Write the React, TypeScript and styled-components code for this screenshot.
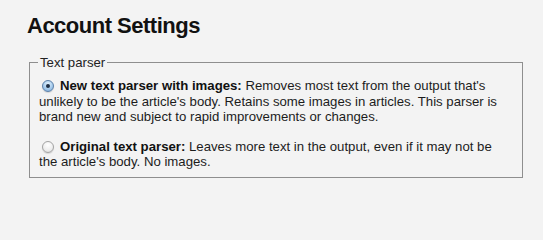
import styled, { createGlobalStyle } from 'styled-components';

const GlobalStyle = createGlobalStyle`
  html, body {
    margin: 0;
    padding: 0;
    background: #f3f3f3;
  }
  body {
    font-family: "Liberation Sans", Arial, sans-serif;
    color: #1a1a1a;
  }
`;

const Page = styled.div`
  padding: 13px 20px 0 27px;
  width: 543px;
  height: 204px;
  box-sizing: border-box;
`;

const Title = styled.h1`
  margin: 0 0 16px 0;
  font-size: 22px;
  line-height: 26px;
  letter-spacing: -0.5px;
  font-weight: bold;
  color: #111;
`;

const Fieldset = styled.fieldset`
  margin: 0 0 0 2px;
  padding: 8px 12px 7px 9px;
  border: 1px solid #8e8e8e;
  width: 494px;
  box-sizing: border-box;
`;

const Legend = styled.legend`
  padding: 0 2px;
  margin-left: -1px;
  font-size: 13.2px;
  line-height: 15px;
  color: #222;
`;

const Option = styled.label`
  display: block;
  font-size: 13.2px;
  line-height: 15.5px;
  color: #1c1c1c;
  & + & {
    margin-top: 14px;
  }
`;

// aqua-style radio: blue when selected, grey otherwise
const Radio = styled.span<{ checked?: boolean }>`
  display: inline-block;
  position: relative;
  width: 12px;
  height: 12px;
  margin: 0 6px 0 3px;
  vertical-align: -2px;
  border-radius: 50%;
  box-sizing: border-box;
  border: 1px solid ${(p) => (p.checked ? '#5b7fa8' : '#a3a3a3')};
  box-shadow: 0 1px 1px rgba(0, 0, 0, 0.12);
  background: ${(p) =>
    p.checked
      ? 'radial-gradient(circle at 50% 30%, #e2f1fc 0%, #a6cbec 55%, #7aa6d6 100%)'
      : 'radial-gradient(circle at 50% 30%, #ffffff 0%, #eeeeee 60%, #d3d3d3 100%)'};
  &::after {
    content: '';
    display: ${(p) => (p.checked ? 'block' : 'none')};
    position: absolute;
    left: 3px;
    top: 3px;
    width: 4px;
    height: 4px;
    border-radius: 50%;
    background: #1d2d44;
  }
`;

const Name = styled.b`
  font-weight: bold;
  color: #111;
`;

export default function App() {
  return (
    <>
      <GlobalStyle />
      <Page>
        <Title>Account Settings</Title>
        <Fieldset>
          <Legend>Text parser</Legend>
          <Option>
            <Radio checked />
            <Name>New text parser with images:</Name> Removes most text from the output that's
            unlikely to be the article's body. Retains some images in articles. This parser is
            brand new and subject to rapid improvements or changes.
          </Option>
          <Option>
            <Radio />
            <Name>Original text parser:</Name> Leaves more text in the output, even if it may not
            be the article's body. No images.
          </Option>
        </Fieldset>
      </Page>
    </>
  );
}
